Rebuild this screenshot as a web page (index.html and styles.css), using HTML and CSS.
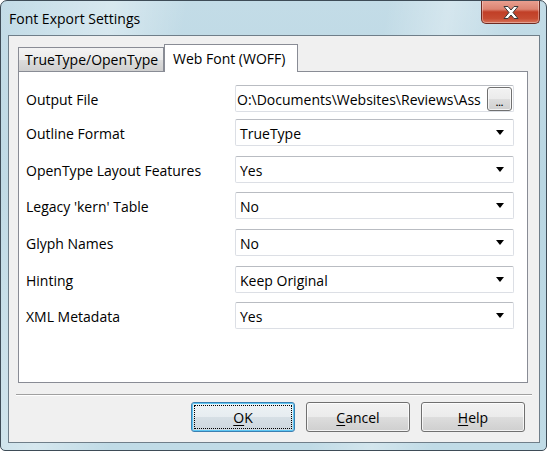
FILE: index.html
```html
<!DOCTYPE html>
<html>
<head>
<meta charset="utf-8">
<link rel="stylesheet" href="styles.css">
</head>
<body>
<div class="window">
  <div class="titlebar">
    <span class="title">Font Export Settings</span>
    <div class="close">
      <svg width="16" height="13" viewBox="0 0 16 13"><polygon points="1,0.5 5,0.5 8,4 11,0.5 15,0.5 10,6.5 15,12.5 11,12.5 8,9 5,12.5 1,12.5 6,6.5" fill="#fff" stroke="#3a3a3a" stroke-width="1" stroke-linejoin="round"/></svg>
    </div>
  </div>
  <div class="client">
    <div class="tabs">
      <div class="tab">TrueType/OpenType</div>
      <div class="tab active">Web Font (WOFF)</div>
    </div>
    <div class="panel">
      <div class="row first">
        <span class="label">Output File</span>
        <div class="field textbox"><span class="value">O:\Documents\Websites\Reviews\Ass</span><span class="browse">...</span></div>
      </div>
      <div class="row">
        <span class="label">Outline Format</span>
        <div class="field combo"><span class="value">TrueType</span><span class="arrow"></span></div>
      </div>
      <div class="row">
        <span class="label">OpenType Layout Features</span>
        <div class="field combo"><span class="value">Yes</span><span class="arrow"></span></div>
      </div>
      <div class="row">
        <span class="label">Legacy 'kern' Table</span>
        <div class="field combo"><span class="value">No</span><span class="arrow"></span></div>
      </div>
      <div class="row">
        <span class="label">Glyph Names</span>
        <div class="field combo"><span class="value">No</span><span class="arrow"></span></div>
      </div>
      <div class="row">
        <span class="label">Hinting</span>
        <div class="field combo"><span class="value">Keep Original</span><span class="arrow"></span></div>
      </div>
      <div class="row">
        <span class="label">XML Metadata</span>
        <div class="field combo"><span class="value">Yes</span><span class="arrow"></span></div>
      </div>
    </div>
    <div class="separator"></div>
    <div class="buttons">
      <div class="btn default"><span class="focus"><u>O</u>K</span></div>
      <div class="btn"><span><u>C</u>ancel</span></div>
      <div class="btn"><span><u>H</u>elp</span></div>
    </div>
  </div>
</div>
</body>
</html>
```

FILE: styles.css
```css
* { box-sizing: border-box; }
html, body { margin: 0; padding: 0; }
body {
  width: 547px;
  height: 451px;
  background: #fff;
  font-family: "Open Sans", "Noto Sans", sans-serif;
  font-size: 14px;
  color: #000;
}
.window {
  width: 547px;
  height: 451px;
  border: 1px solid #3e4c57;
  border-radius: 7px 7px 5px 5px;
  background:
    linear-gradient(100deg, rgba(255,255,255,0) 0%, rgba(255,255,255,0.35) 18%, rgba(255,255,255,0) 30%, rgba(255,255,255,0) 62%, rgba(255,255,255,0.3) 72%, rgba(255,255,255,0) 82%),
    linear-gradient(to bottom, #c3dce7 0%, #b9d6e2 40%, #c0dbe6 100%);
  display: flex;
  flex-direction: column;
  overflow: hidden;
}
.titlebar {
  height: 34px;
  flex: none;
  display: flex;
  align-items: flex-start;
  padding-left: 8px;
}
.title {
  margin-top: 8px;
  font-size: 14px;
  line-height: 20px;
  color: #000;
}
.close {
  margin-left: auto;
  margin-right: 6px;
  margin-top: -1px;
  width: 59px;
  height: 24px;
  border: 1px solid #6e2b22;
  border-top: none;
  border-radius: 0 0 5px 5px;
  background: linear-gradient(to bottom, #eaa293 0%, #dc8472 40%, #c13f27 52%, #c64b31 80%, #d8735a 100%);
  box-shadow: inset 0 0 0 1px rgba(255,255,255,0.35);
  display: flex;
  align-items: center;
  justify-content: center;
  padding-top: 1px;
}
.client {
  flex: 1;
  margin: 0 6px 7px 7px;
  border: 1px solid #6f7e89;
  background: #f0f0f0;
  display: flex;
  flex-direction: column;
  padding: 8px 0 0 9px;
}
.tabs {
  display: flex;
  align-items: flex-end;
  height: 27px;
  flex: none;
}
.tab {
  height: 24px;
  width: 146px;
  border: 1px solid #898c95;
  border-bottom: none;
  background: linear-gradient(to bottom, #f3f3f3 0%, #ebebeb 50%, #dddddd 51%, #cfcfcf 100%);
  padding-left: 6px;
  padding-top: 1px;
  line-height: 22px;
  white-space: nowrap;
}
.tab.active {
  position: relative;
  z-index: 1;
  height: 28px;
  width: 134px;
  margin-bottom: -1px;
  background: #fff;
  padding-left: 8px;
  line-height: 26px;
}
.panel {
  width: 510px;
  height: 312px;
  border: 1px solid #898c95;
  background: #fff;
  padding: 13px 13px 0 7px;
  display: flex;
  flex-direction: column;
  gap: 9.67px;
}
.row {
  display: flex;
  align-items: center;
  height: 27px;
  flex: none;
}
.row.first { margin-bottom: -2.67px; }
.label {
  width: 209px;
  flex: none;
  white-space: nowrap;
  padding-top: 2px;
}
.field {
  flex: 1;
  height: 27px;
  border: 1px solid #dcdfe5;
  border-top-color: #b9bcc2;
  border-radius: 2px;
  background: #fff;
  display: flex;
  align-items: center;
  overflow: hidden;
}
.value {
  white-space: nowrap;
  padding-left: 4px;
  padding-top: 2px;
  flex: 1;
  min-width: 0;
  overflow: hidden;
}
.textbox .value { padding-left: 1px; }
.arrow {
  width: 0;
  height: 0;
  border-left: 4px solid transparent;
  border-right: 4px solid transparent;
  border-top: 5px solid #000;
  margin-right: 9px;
  flex: none;
}
.browse {
  flex: none;
  width: 25px;
  height: 24px;
  margin: 0 1px 0 -3px;
  border: 1px solid #707070;
  border-radius: 3px;
  background: linear-gradient(to bottom, #f2f2f2 0%, #ebebeb 50%, #dddddd 51%, #cfcfcf 100%);
  box-shadow: inset 0 0 0 1px rgba(255,255,255,0.7);
  font-size: 9px;
  font-weight: bold;
  line-height: 10px;
  padding-top: 10px;
  text-align: center;
  letter-spacing: 0;
}
.separator {
  margin: 11px 7px 0 -2px;
  height: 2px;
  border-top: 1px solid #a0a0a0;
  border-bottom: 1px solid #fff;
  flex: none;
}
.buttons {
  display: flex;
  justify-content: flex-end;
  gap: 11px;
  margin-top: 6px;
  padding-right: 14px;
}
.btn {
  width: 104px;
  height: 30px;
  border: 1px solid #707070;
  border-radius: 3px;
  background: linear-gradient(to bottom, #f2f2f2 0%, #ebebeb 50%, #dddddd 51%, #cfcfcf 100%);
  box-shadow: inset 0 0 0 1px rgba(255,255,255,0.75);
  display: flex;
  align-items: stretch;
  justify-content: center;
  padding: 2px;
}
.btn span {
  flex: 1;
  display: flex;
  align-items: center;
  justify-content: center;
  border: 1px dotted transparent;
}
.btn.default {
  border-color: #3c7fb1;
  background: linear-gradient(to bottom, #eef3f6 0%, #e6ecf0 50%, #d6dfe5 51%, #cdd7de 100%);
  box-shadow: inset 0 0 0 1px #5ec7f3;
}
.btn span.focus { border-color: #000; }
u { text-decoration-thickness: 1px; text-underline-offset: 2px; }
```
